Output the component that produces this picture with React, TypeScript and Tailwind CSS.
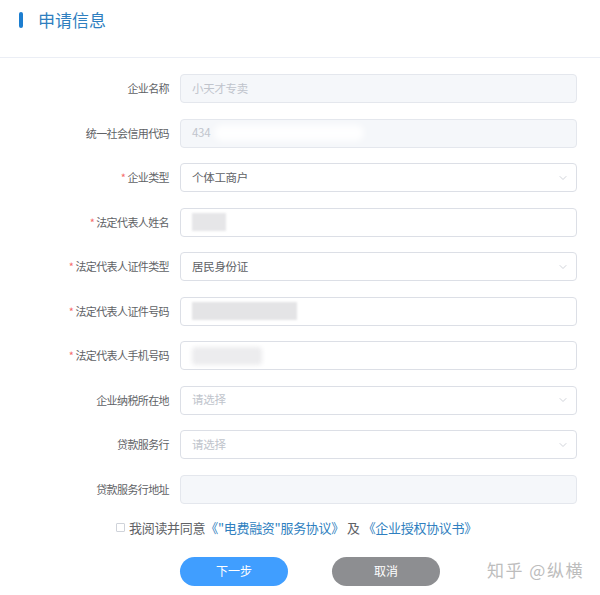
import { ChevronDown } from "lucide-react";

type Row = {
  label: string;
  required?: boolean;
  kind: "disabled" | "input" | "select";
  value?: string;
  placeholder?: string;
  blur?: "name" | "id" | "phone" | "code";
};

const rows: Row[] = [
  { label: "企业名称", kind: "disabled", placeholder: "小天才专卖" },
  { label: "统一社会信用代码", kind: "disabled", placeholder: "434", blur: "code" },
  { label: "企业类型", required: true, kind: "select", value: "个体工商户" },
  { label: "法定代表人姓名", required: true, kind: "input", blur: "name" },
  { label: "法定代表人证件类型", required: true, kind: "select", value: "居民身份证" },
  { label: "法定代表人证件号码", required: true, kind: "input", blur: "id" },
  { label: "法定代表人手机号码", required: true, kind: "input", blur: "phone" },
  { label: "企业纳税所在地", kind: "select", placeholder: "请选择" },
  { label: "贷款服务行", kind: "select", placeholder: "请选择" },
  { label: "贷款服务行地址", kind: "disabled" },
];

function Field({ row }: { row: Row }) {
  const disabled = row.kind === "disabled";
  return (
    <div className="flex items-center h-[29px]">
      <label className="w-[170px] pr-[1px] text-right text-[11px] tracking-[-0.6px] text-[#606266] shrink-0">
        {row.required && <span className="text-[#f56c6c] mr-[2px]">*</span>}
        {row.label}
      </label>
      <div
        className={
          "ml-[10px] w-[397px] h-[29px] rounded-[4px] border flex items-center px-[11px] relative overflow-hidden " +
          (disabled ? "bg-[#f5f7fa] border-[#e4e7ed]" : "bg-white border-[#dcdfe6]")
        }
      >
        {row.value && <span className="text-[11.5px] tracking-[-0.3px] text-[#606266]">{row.value}</span>}
        {row.placeholder && (
          <span className="text-[11.5px] tracking-[-0.3px] text-[#c0c4cc]">{row.placeholder}</span>
        )}
        {row.blur === "code" && (
          <div className="ml-[4px] w-[150px] h-[16px] rounded-full bg-white/90 blur-[3px]" />
        )}
        {row.blur === "name" && <div className="w-[34px] h-[18px] bg-[#e6e6e8] blur-[1px]" />}
        {row.blur === "id" && <div className="w-[105px] h-[18px] bg-[#e4e4e6] blur-[1px]" />}
        {row.blur === "phone" && <div className="w-[70px] h-[18px] rounded-[4px] bg-[#ececee] blur-[2px]" />}
        {row.kind === "select" && (
          <ChevronDown className="absolute right-[7px] w-[12px] h-[12px] text-[#c0c4cc]" strokeWidth={1.5} />
        )}
      </div>
    </div>
  );
}

export default function App() {
  return (
    <div
      className="w-[600px] h-[595px] bg-white overflow-hidden relative"
      style={{ fontFamily: '"Noto Sans CJK SC", "Noto Sans", sans-serif' }}
    >
      <div className="h-[58px] border-b border-[#ebeef5] flex items-center pl-[19px] pb-[18px]">
        <div className="w-[4px] h-[16px] rounded-[2px] bg-[#1c7ed0]" />
        <h1 className="ml-[15px] text-[17px] text-[#2f7fc0] leading-none">申请信息</h1>
      </div>

      <div className="pt-[16px] flex flex-col gap-[15.5px]">
        {rows.map((r) => (
          <Field key={r.label} row={r} />
        ))}
      </div>

      <div className="mt-[17px] pl-[116px] flex items-center text-[13px] tracking-[-0.3px] leading-none">
        <span className="w-[9px] h-[9px] border border-[#cfd3da] rounded-[1px] bg-white" />
        <span className="ml-[4px] text-[#606266]">我阅读并同意</span>
        <span className="text-[#2f7fc0]">《"电费融资"服务协议》</span>
        <span className="text-[#606266] mx-[3px]">及</span>
        <span className="text-[#2f7fc0]">《企业授权协议书》</span>
      </div>

      <div className="mt-[23px] pl-[180px] flex gap-[44px]">
        <button className="w-[108px] h-[29px] rounded-full bg-[#409eff] text-white text-[12px]">下一步</button>
        <button className="w-[108px] h-[29px] rounded-full bg-[#8d8e91] text-white text-[12px]">取消</button>
      </div>

      <div className="absolute left-[487px] top-[559px] text-[17px] leading-[22px] text-[#bdbdbd] tracking-[1.5px]">
        知乎 @纵横
      </div>
    </div>
  );
}
